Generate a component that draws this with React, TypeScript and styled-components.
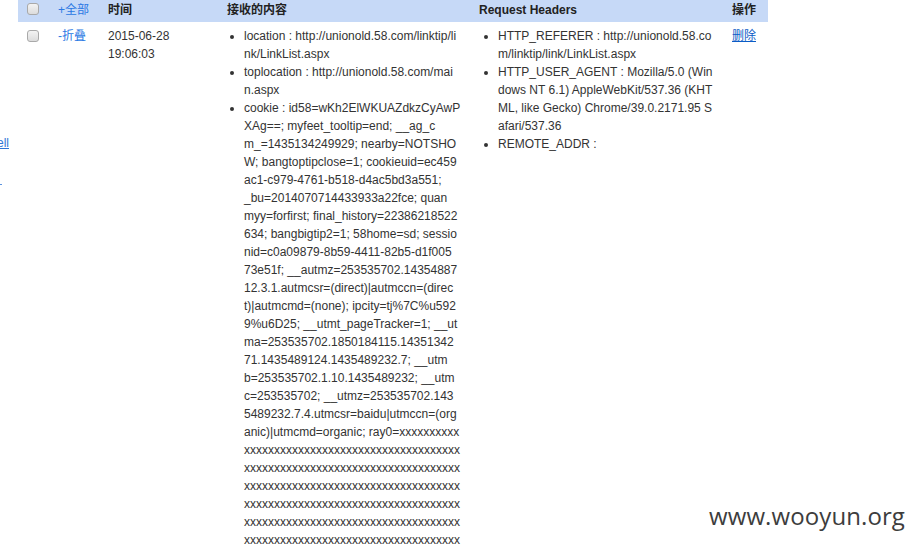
import React from 'react';
import styled, { createGlobalStyle } from 'styled-components';

const Global = createGlobalStyle`
  html, body { margin: 0; padding: 0; background: #fff; overflow: hidden; }
  body {
    font-family: "Liberation Sans", Arial, "Noto Sans CJK SC", sans-serif;
    font-size: 12px;
    color: #333;
  }
`;

const Page = styled.div`
  position: relative;
  display: flex;
  align-items: flex-start;
  width: 914px;
  height: 546px;
  overflow: hidden;
`;

const Side = styled.nav`
  flex: none;
  width: 18px;
  box-sizing: border-box;
  padding: 134px 9px 0 0;
  overflow: hidden;
  display: flex;
  flex-direction: column;
  align-items: flex-end;
  line-height: 18px;
`;

const SideLink = styled.a`
  white-space: nowrap;
  color: #2f76d6;
  text-decoration: underline;
`;

const SideMark = styled.span`
  align-self: flex-start;
  width: 2px;
  height: 1px;
  margin-top: 32px;
  background: #5b93de;
`;

const Table = styled.div`
  display: grid;
  grid-template-columns: 32px 50px 119px 252px 253px 44px;
  width: 750px;
  font-family: "Liberation Sans", Arial, "Noto Sans CJK SC", sans-serif;
`;

const Th = styled.div<{ $box?: boolean }>`
  background: #c6d9f7;
  height: 22px;
  box-sizing: border-box;
  padding: ${(p) => (p.$box ? '3px 0 0 9px' : '1px 8px 0')};
  line-height: 18px;
  font-weight: bold;
  color: #222;
  white-space: nowrap;
`;

const Td = styled.div<{ $box?: boolean }>`
  padding: ${(p) => (p.$box ? '8px 0 0 9px' : '5px 8px 0')};
  line-height: 18px;
  color: #333;
`;

const Check = styled.span`
  display: block;
  width: 12px;
  height: 12px;
  box-sizing: border-box;
  border: 1px solid #a9a9a9;
  border-radius: 3px;
  background: linear-gradient(#f3f3f3, #dcdcdc);
`;

const Toggle = styled.a`
  color: #2a78e4;
  text-decoration: none;
  font-weight: normal;
  cursor: pointer;
`;

const Del = styled.a`
  color: #0b5cc6;
  text-decoration: underline;
  cursor: pointer;
`;

const List = styled.ul<{ $indent: number }>`
  margin: 0;
  padding: 0 0 0 ${(p) => p.$indent}px;
  list-style: disc;
`;

const Item = styled.li`
  line-height: 18px;
`;

const Line = styled.span`
  display: block;
  white-space: pre;
`;

const Watermark = styled.div`
  position: absolute;
  right: 9px;
  top: 500px;
  font-family: "Open Sans", "Noto Sans", sans-serif;
  font-size: 24px;
  line-height: 32px;
  color: #3d3d3d;
  letter-spacing: 0.1px;
`;

const X = 'x'.repeat(36);

const content: string[][] = [
  ['location : http://unionold.58.com/linktip/li', 'nk/LinkList.aspx'],
  ['toplocation : http://unionold.58.com/mai', 'n.aspx'],
  [
    'cookie : id58=wKh2ElWKUAZdkzCyAwP',
    'XAg==; myfeet_tooltip=end; __ag_c',
    'm_=1435134249929; nearby=NOTSHO',
    'W; bangtoptipclose=1; cookieuid=ec459',
    'ac1-c979-4761-b518-d4ac5bd3a551;',
    '_bu=2014070714433933a22fce; quan',
    'myy=forfirst; final_history=22386218522',
    '634; bangbigtip2=1; 58home=sd; sessio',
    'nid=c0a09879-8b59-4411-82b5-d1f005',
    '73e51f; __autmz=253535702.14354887',
    '12.3.1.autmcsr=(direct)|autmccn=(direc',
    't)|autmcmd=(none); ipcity=tj%7C%u592',
    '9%u6D25; __utmt_pageTracker=1; __ut',
    'ma=253535702.1850184115.14351342',
    '71.1435489124.1435489232.7; __utm',
    'b=253535702.1.10.1435489232; __utm',
    'c=253535702; __utmz=253535702.143',
    '5489232.7.4.utmcsr=baidu|utmccn=(org',
    'anic)|utmcmd=organic; ray0=xxxxxxxxxx',
    X, X, X, X, X, X, X, X,
  ],
];

const headers: string[][] = [
  ['HTTP_REFERER : http://unionold.58.co', 'm/linktip/link/LinkList.aspx'],
  [
    'HTTP_USER_AGENT : Mozilla/5.0 (Win',
    'dows NT 6.1) AppleWebKit/537.36 (KHT',
    'ML, like Gecko) Chrome/39.0.2171.95 S',
    'afari/537.36',
  ],
  ['REMOTE_ADDR :'],
];

const Lines: React.FC<{ items: string[][]; indent: number }> = ({ items, indent }) => (
  <List $indent={indent}>
    {items.map((lines, i) => (
      <Item key={i}>
        {lines.map((l, j) => (
          <Line key={j}>{l}</Line>
        ))}
      </Item>
    ))}
  </List>
);

export default function App() {
  return (
    <Page>
      <Global />
      <Side>
        <SideLink>Shell</SideLink>
        <SideMark />
      </Side>
      <Table>
        <Th $box>
          <Check />
        </Th>
        <Th>
          <Toggle>+全部</Toggle>
        </Th>
        <Th>时间</Th>
        <Th>接收的内容</Th>
        <Th>Request Headers</Th>
        <Th>操作</Th>

        <Td $box>
          <Check />
        </Td>
        <Td>
          <Toggle>-折叠</Toggle>
        </Td>
        <Td>2015-06-28 19:06:03</Td>
        <Td>
          <Lines items={content} indent={17} />
        </Td>
        <Td>
          <Lines items={headers} indent={19} />
        </Td>
        <Td>
          <Del>删除</Del>
        </Td>
      </Table>
      <Watermark>www.wooyun.org</Watermark>
    </Page>
  );
}
